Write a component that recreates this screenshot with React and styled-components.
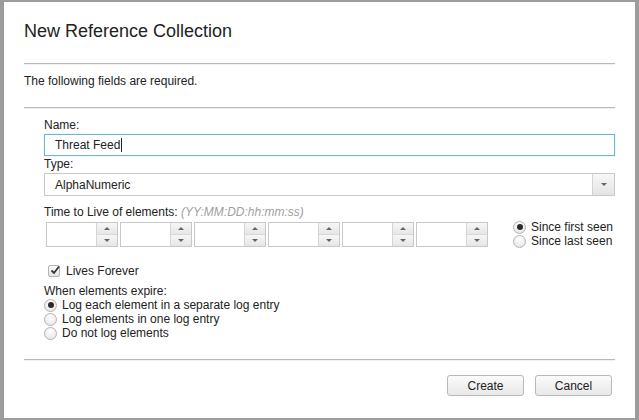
import React from "react";
import styled, { createGlobalStyle } from "styled-components";

const Global = createGlobalStyle`
  html, body {
    margin: 0;
    padding: 0;
    background: #9c9c9c;
  }
  body {
    font-family: "Liberation Sans", Arial, Helvetica, sans-serif;
    color: #222;
  }
`;

const Frame = styled.div`
  width: 639px;
  height: 420px;
  padding: 2px 4px;
  box-sizing: border-box;
`;

const Dialog = styled.div`
  background: #fff;
  height: 416px;
  padding: 0 20px;
  box-sizing: border-box;
  display: flex;
  flex-direction: column;
`;

const Title = styled.h1`
  margin: 0;
  padding: 18px 0 0;
  height: 61px;
  box-sizing: border-box;
  font-size: 18px;
  font-weight: normal;
  line-height: 22px;
  color: #222;
`;

const Divider = styled.div`
  height: 0;
  border-top: 1px solid #b8b8b8;
  border-bottom: 1px solid #f0f0f0;
`;

const Note = styled.p`
  margin: 0;
  height: 42px;
  padding-top: 9px;
  box-sizing: border-box;
  font-size: 12px;
  line-height: 14px;
`;

const Form = styled.div`
  padding: 9px 0 0 20px;
  height: 250px;
  box-sizing: border-box;
  display: flex;
  flex-direction: column;
`;

const Label = styled.div`
  font-size: 12px;
  line-height: 14px;
  margin-top: ${(p) => p.$top || 0}px;
`;

const Hint = styled.span`
  font-style: italic;
  color: #a0a0a0;
`;

const TextBox = styled.div`
  margin-top: 2px;
  height: 22px;
  box-sizing: border-box;
  border: 1px solid #6eb3d8;
  box-shadow: 0 0 1px rgba(110, 179, 216, 0.6);
  display: flex;
  align-items: center;
  padding-left: 10px;
  font-size: 12px;
`;

const Caret = styled.span`
  display: inline-block;
  width: 1px;
  height: 14px;
  background: #222;
  margin-left: 1px;
`;

const Select = styled.div`
  margin-top: 2px;
  height: 23px;
  box-sizing: border-box;
  border: 1px solid #c8c8c8;
  display: flex;
  align-items: stretch;
  font-size: 12px;
`;

const SelectValue = styled.div`
  flex: 1;
  display: flex;
  align-items: center;
  padding-left: 10px;
`;

const SelectButton = styled.div`
  width: 21px;
  border-left: 1px solid #d4d4d4;
  background: linear-gradient(#f8f8f8, #e4e4e4);
  display: flex;
  align-items: center;
  justify-content: center;
`;

const Arrow = styled.span`
  width: 0;
  height: 0;
  border-left: 3px solid transparent;
  border-right: 3px solid transparent;
  ${(p) =>
    p.$up
      ? "border-bottom: 3px solid #666;"
      : "border-top: 3px solid #666;"}
`;

const TtlRow = styled.div`
  margin-top: 1px;
  display: flex;
  align-items: center;
`;

const Spinners = styled.div`
  display: flex;
  gap: 2px;
  margin-left: 2px;
`;

const Spinner = styled.div`
  width: 72px;
  height: 25px;
  display: flex;
  box-sizing: border-box;
  border: 1px solid #c8c8c8;
`;

const SpinInput = styled.div`
  flex: 1;
  background: #fff;
`;

const SpinButtons = styled.div`
  width: 20px;
  border-left: 1px solid #d4d4d4;
  display: flex;
  flex-direction: column;
`;

const SpinHalf = styled.div`
  flex: 1;
  background: linear-gradient(#f7f7f7, #e6e6e6);
  display: flex;
  align-items: center;
  justify-content: center;
  & + & {
    border-top: 1px solid #d8d8d8;
  }
`;

const RadioGroup = styled.div`
  margin-left: 25px;
  display: flex;
  flex-direction: column;
`;

const Option = styled.label`
  display: flex;
  align-items: center;
  height: 14px;
  font-size: 12px;
  line-height: 14px;
  gap: 5px;
`;

const RadioDot = styled.span`
  width: 13px;
  height: 13px;
  box-sizing: border-box;
  border-radius: 50%;
  border: 1px solid #b4b4b4;
  background: radial-gradient(circle at 50% 30%, #ffffff, #e2e2e2);
  display: flex;
  align-items: center;
  justify-content: center;
  flex: none;
  &::after {
    content: "";
    display: ${(p) => (p.$on ? "block" : "none")};
    width: 6px;
    height: 6px;
    border-radius: 50%;
    background: #2a2a2a;
  }
`;

const CheckRow = styled.label`
  margin: 16px 0 0 4px;
  display: flex;
  align-items: center;
  gap: 6px;
  font-size: 12px;
  line-height: 14px;
`;

const CheckBox = styled.span`
  width: 12px;
  height: 12px;
  box-sizing: border-box;
  border: 1px solid #b4b4b4;
  border-radius: 2px;
  background: linear-gradient(#fdfdfd, #e4e4e4);
  position: relative;
  flex: none;
  svg {
    position: absolute;
    left: 0px;
    top: -2px;
  }
`;

const ExpireList = styled.div`
  display: flex;
  flex-direction: column;
`;

const Footer = styled.div`
  flex: 1;
  display: flex;
  justify-content: flex-end;
  align-items: flex-start;
  gap: 11px;
  padding: 14px 3px 0 0;
`;

const Button = styled.button`
  width: 77px;
  height: 21px;
  border: 1px solid #b8b8b8;
  border-radius: 3px;
  background: linear-gradient(#fbfbfb, #e8e8e8);
  font-family: "Liberation Sans", Arial, sans-serif;
  font-size: 12px;
  color: #222;
  padding: 0;
`;

const fields = [0, 1, 2, 3, 4, 5];

export default function App() {
  return (
    <Frame>
      <Global />
      <Dialog>
        <Title>New Reference Collection</Title>
        <Divider />
        <Note>The following fields are required.</Note>
        <Divider />
        <Form>
          <Label>Name:</Label>
          <TextBox>
            Threat Feed
            <Caret />
          </TextBox>
          <Label $top={1}>Type:</Label>
          <Select>
            <SelectValue>AlphaNumeric</SelectValue>
            <SelectButton>
              <Arrow />
            </SelectButton>
          </Select>
          <Label $top={9}>
            Time to Live of elements: <Hint>(YY:MM:DD:hh:mm:ss)</Hint>
          </Label>
          <TtlRow>
            <Spinners>
              {fields.map((f) => (
                <Spinner key={f}>
                  <SpinInput />
                  <SpinButtons>
                    <SpinHalf>
                      <Arrow $up />
                    </SpinHalf>
                    <SpinHalf>
                      <Arrow />
                    </SpinHalf>
                  </SpinButtons>
                </Spinner>
              ))}
            </Spinners>
            <RadioGroup>
              <Option>
                <RadioDot $on />
                Since first seen
              </Option>
              <Option>
                <RadioDot />
                Since last seen
              </Option>
            </RadioGroup>
          </TtlRow>
          <CheckRow>
            <CheckBox>
              <svg width="12" height="12" viewBox="0 0 12 12">
                <path
                  d="M2.5 6.5 L5 9 L10 2.5"
                  fill="none"
                  stroke="#333"
                  strokeWidth="1.8"
                />
              </svg>
            </CheckBox>
            Lives Forever
          </CheckRow>
          <Label $top={6}>When elements expire:</Label>
          <ExpireList>
            <Option>
              <RadioDot $on />
              Log each element in a separate log entry
            </Option>
            <Option>
              <RadioDot />
              Log elements in one log entry
            </Option>
            <Option>
              <RadioDot />
              Do not log elements
            </Option>
          </ExpireList>
        </Form>
        <Divider />
        <Footer>
          <Button>Create</Button>
          <Button>Cancel</Button>
        </Footer>
      </Dialog>
    </Frame>
  );
}
